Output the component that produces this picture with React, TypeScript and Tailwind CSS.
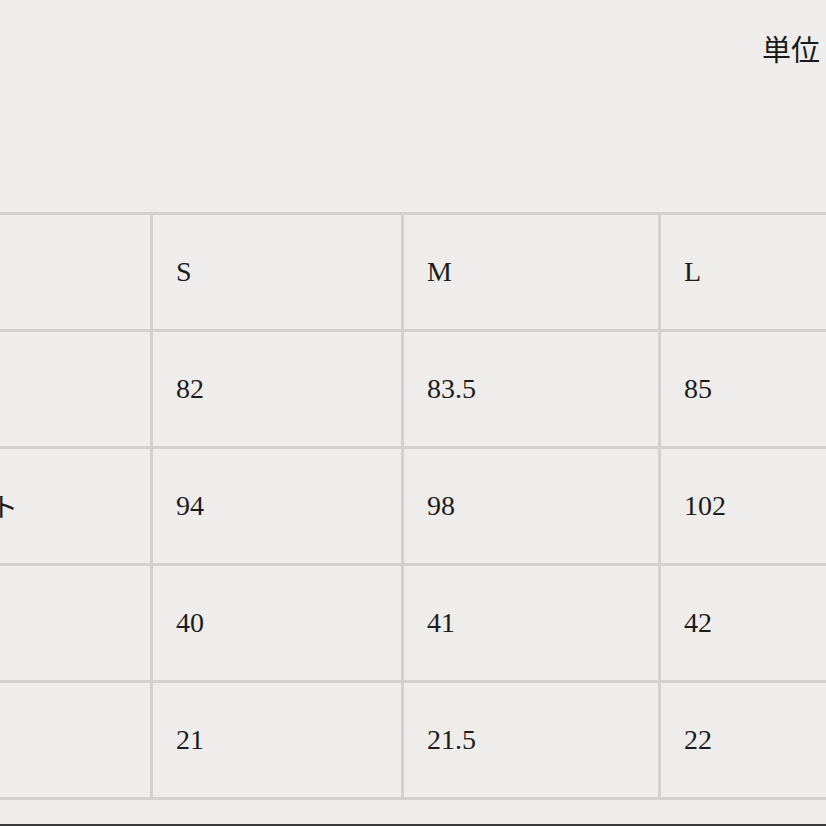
const SIZES = ['S', 'M', 'L'];

const ROWS: { label: string; values: string[] }[] = [
  { label: '着丈', values: ['82', '83.5', '85'] },
  { label: 'バスト', values: ['94', '98', '102'] },
  { label: '肩幅', values: ['40', '41', '42'] },
  { label: '袖丈', values: ['21', '21.5', '22'] },
];

function Cell({ children }: { children?: React.ReactNode }) {
  return (
    <div className="bg-[#eeedeb] h-[114px] flex items-center pl-[23px] whitespace-nowrap text-[28px] text-[#1c1c1c]">
      {children}
    </div>
  );
}

export default function App() {
  return (
    <div
      className="w-[826px] h-[826px] overflow-hidden bg-[#eeedeb] flex flex-col"
      style={{ fontFamily: '"Liberation Serif", "Noto Sans CJK JP", serif' }}
    >
      {/* unit label, clipped at the right edge */}
      <div
        className="pt-[34px] pl-[762px] whitespace-nowrap text-[29px] leading-none text-[#1a1a1a]"
        style={{ fontFamily: '"Noto Sans CJK JP", serif' }}
      >
        単位：cm
      </div>

      {/* size table, first column runs off the left edge */}
      <div className="mt-[149px] -ml-[89px] w-[1003px] grid grid-cols-[236px_248px_254px_250px] gap-[3px] p-[3px] bg-[#d2d1d0]">
        <Cell />
        {SIZES.map((s) => (
          <Cell key={s}>{s}</Cell>
        ))}
        {ROWS.map((r) => (
          <div key={r.label} className="contents">
            <Cell>
              <span className="text-[27px]" style={{ fontFamily: '"Noto Sans CJK JP", serif' }}>{r.label}</span>
            </Cell>
            {r.values.map((v, i) => (
              <Cell key={i}>{v}</Cell>
            ))}
          </div>
        ))}
      </div>

      <div className="flex-1" />
      <div className="h-[2px] bg-[#3a3a3a]" />
    </div>
  );
}
